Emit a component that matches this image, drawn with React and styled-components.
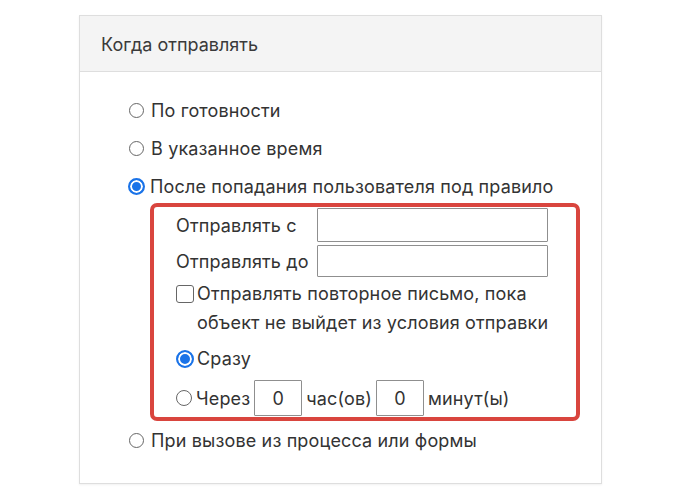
import React from 'react';
import styled, { createGlobalStyle, css } from 'styled-components';

const GlobalStyle = createGlobalStyle`
	body {
		margin: 0;
		background: #fff;
		font-family: Inter, "Noto Sans", sans-serif;
		color: #333;
	}
`;

const Page = styled.div`
	padding: 15px 0 14px 79px;
`;

const Panel = styled.section`
	width: 521px;
	border: 1px solid #dedede;
	box-shadow: 0 1px 2px rgba(0, 0, 0, 0.06);
	background: #fff;
`;

const PanelHeader = styled.header`
	height: 56px;
	display: flex;
	align-items: center;
	padding: 1px 0 0 21px;
	box-sizing: border-box;
	background: #f4f4f4;
	border-bottom: 1px solid #dedede;
	font-size: 18px;
	color: #3a3a3a;
`;

const PanelBody = styled.div`
	padding: 19px 0 24px 48px;
	font-size: 18px;
	letter-spacing: 0.15px;
`;

const OptionRow = styled.label`
	display: flex;
	align-items: center;
	height: ${(p) => p.$h || 38}px;
	gap: ${(p) => p.$gap ?? 7}px;
	margin-top: ${(p) => p.$mt || 0}px;
	white-space: nowrap;
`;

const Radio = styled.span`
	box-sizing: border-box;
	flex: none;
	width: ${(p) => p.$size || 15}px;
	height: ${(p) => p.$size || 15}px;
	margin-left: ${(p) => p.$ml || 0}px;
	border-radius: 50%;
	border: 1px solid #666;
	background: #fff;
	${(p) =>
		p.$checked &&
		css`
			border: 2px solid #1a73e8;
			background: #1a73e8;
			box-shadow: inset 0 0 0 2px #fff;
		`}
`;

const Checkbox = styled.span`
	box-sizing: border-box;
	flex: none;
	width: 18px;
	height: 18px;
	border: 1px solid #666;
	border-radius: 3px;
	background: #fff;
	margin-top: 4px;
`;

const Highlight = styled.div`
	box-sizing: border-box;
	width: 430px;
	margin: -2px 0 0 22px;
	border: 4px solid #d9453e;
	border-radius: 7px;
	padding: 1px 0 1px 22px;
`;

const FieldGrid = styled.div`
	display: grid;
	grid-template-columns: 141px 231px;
	row-gap: 3px;
	align-items: center;
`;

const FieldLabel = styled.span`
	white-space: nowrap;
`;

const TextInput = styled.input`
	box-sizing: border-box;
	width: ${(p) => p.$w || 231}px;
	height: ${(p) => p.$h || 33}px;
	border: 1px solid #8f8f8f;
	border-radius: 1px;
	font: inherit;
	color: #333;
	text-align: ${(p) => (p.$center ? 'center' : 'left')};
	padding: 0;
	outline: none;
`;

const CheckRow = styled.label`
	display: flex;
	align-items: flex-start;
	gap: 3px;
	margin-top: 4px;
	line-height: 29px;
`;

const CheckText = styled.span`
	display: block;
	width: 362px;
	margin-top: -2px;
`;

export default function App() {
	return (
		<>
			<GlobalStyle />
			<Page>
				<Panel>
					<PanelHeader>Когда отправлять</PanelHeader>
					<PanelBody>
						<OptionRow>
							<Radio $ml={1} />
							По готовности
						</OptionRow>
						<OptionRow>
							<Radio $ml={1} />
							В указанное время
						</OptionRow>
						<OptionRow $gap={5}>
							<Radio $checked $size={17} />
							После попадания пользователя под правило
						</OptionRow>
						<Highlight>
							<FieldGrid>
								<FieldLabel>Отправлять с</FieldLabel>
								<TextInput $h={34} />
								<FieldLabel>Отправлять до</FieldLabel>
								<TextInput $h={32} />
							</FieldGrid>
							<CheckRow>
								<Checkbox />
								<CheckText>Отправлять повторное письмо, пока объект не выйдет из условия отправки</CheckText>
							</CheckRow>
							<OptionRow $h={39} $gap={3} $mt={2}>
								<Radio $checked $size={18} />
								Сразу
							</OptionRow>
							<OptionRow $h={36} $gap={4} $mt={2}>
								<Radio $size={16} />
								<span>Через</span>
								<TextInput $w={48} $h={36} $center defaultValue="0" />
								<span>час(ов)</span>
								<TextInput $w={48} $h={36} $center defaultValue="0" />
								<span>минут(ы)</span>
							</OptionRow>
						</Highlight>
						<OptionRow>
							<Radio $ml={1} />
							При вызове из процесса или формы
						</OptionRow>
					</PanelBody>
				</Panel>
			</Page>
		</>
	);
}
